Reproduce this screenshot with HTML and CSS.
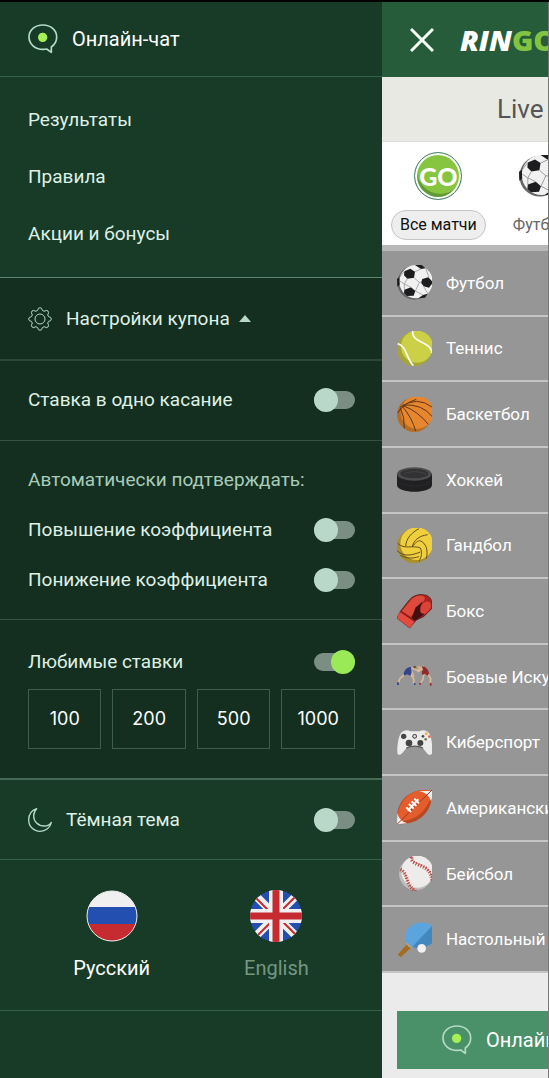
FILE: index.html
```html
<!DOCTYPE html>
<html lang="ru">
<head>
    <meta charset="UTF-8">
    <meta name="viewport" content="width=device-width, initial-scale=1.0">
    <title>Ringo</title>
    <link rel="stylesheet" href="styles.css">
</head>
<body>
    <svg class="sprite" aria-hidden="true">
        <symbol id="chat" viewBox="0 0 90 90">
            <path d="M45 3C21 3 3 18 3 39s18 37 42 37c4 0 8 0 11-1l14 10v-16c10-7 16-17 16-30C86 18 68 3 45 3z" fill="none" stroke="#b3dbc6" stroke-width="5" stroke-linejoin="round"/>
            <circle cx="44" cy="40" r="14" fill="#a5f155"/>
        </symbol>
        <symbol id="football" viewBox="0 0 105 105">
            <circle cx="52" cy="53" r="51" fill="#666"/>
            <circle cx="57" cy="50" r="50" fill="#f1f1f1"/>
            <path d="M22 19l18-8 14 9-3 18-20 3-10-10zM76 42l18-5 14 15-12 16-16-4-8-11zM22 74l20-7 13 11-5 14-20 1-9-8zM54 0h20l12 10-14 2zM64 100l14-10 14-4-8 12zM0 42l7-5 1 22-7 6z" fill="#1d1d1f"/>
            <path d="M51 38l16 14-12 26M67 52h8M54 20l18-8M86 10l10 27M31 41l-9 16v17M42 67l-20-10M80 64l12 22M55 78l23 12M8 48l14 9M22 19L8 37" fill="none" stroke="#888" stroke-width="2"/>
        </symbol>
    </svg>

    <div class="layout">
        <nav class="drawer">
            <a class="chat-link" href="#chat">
                <svg class="icon-chat"><use href="#chat"/></svg>
                Онлайн-чат
            </a>

            <div class="links">
                <a href="#results">Результаты</a>
                <a href="#rules">Правила</a>
                <a href="#promo">Акции и бонусы</a>
            </div>

            <section class="coupon">
                <button class="coupon-toggle" type="button" aria-expanded="true">
                    <svg class="icon" viewBox="0 0 72 72" fill="none" stroke="#b3dbc6" stroke-width="3" stroke-linejoin="round">
                        <circle cx="36" cy="36" r="15"/>
                        <path d="M29 10Q30 2 36 2T43 10L48 13Q56 8 60 12T59 24L62 29Q70 30 70 36T62 43L59 48Q64 56 60 60T48 59L43 62Q42 70 36 70T29 62L24 59Q16 64 12 60T13 48L10 43Q2 42 2 36T10 29L13 24Q8 16 12 12T24 13Z"/>
                    </svg>
                    Настройки купона
                    <span class="arrow"></span>
                </button>

                <div class="block single">
                    <label class="option">Ставка в одно касание <input class="switch" type="checkbox"></label>
                </div>

                <div class="block auto">
                    <p>Автоматически подтверждать:</p>
                    <label class="option">Повышение коэффициента <input class="switch" type="checkbox"></label>
                    <label class="option">Понижение коэффициента <input class="switch" type="checkbox"></label>
                </div>

                <div class="block favorite">
                    <label class="option">Любимые ставки <input class="switch" type="checkbox" checked></label>
                    <div class="bets">
                        <button type="button">100</button>
                        <button type="button">200</button>
                        <button type="button">500</button>
                        <button type="button">1000</button>
                    </div>
                </div>
            </section>

            <label class="theme">
                <svg class="icon" viewBox="0 0 72 72" fill="none" stroke="#b3dbc6" stroke-width="4" stroke-linejoin="round">
                    <path d="M26 2C11 7 2 20 2 36c0 19 15 34 34 34 17 0 31-11 34-27-5 8-13 11-21 11C30 54 17 40 17 24c0-9 3-16 9-22z"/>
                </svg>
                Тёмная тема
                <input class="switch" type="checkbox">
            </label>

            <div class="langs">
                <a class="lang active" href="#ru">
                    <svg class="flag" viewBox="0 0 52 52">
                        <clipPath id="ru-clip"><circle cx="26" cy="26" r="25"/></clipPath>
                        <g clip-path="url(#ru-clip)">
                            <path d="M0 0h52v17H0z" fill="#f0f0f0"/>
                            <path d="M0 17h52v17H0z" fill="#2350b0"/>
                            <path d="M0 34h52v18H0z" fill="#c62b31"/>
                        </g>
                        <circle cx="26" cy="26" r="25" fill="none" stroke="#f0f0f0"/>
                    </svg>
                    Русский
                </a>
                <a class="lang" href="#en">
                    <svg class="flag" viewBox="0 0 52 52">
                        <clipPath id="en-clip"><circle cx="26" cy="26" r="26"/></clipPath>
                        <g clip-path="url(#en-clip)">
                            <path d="M0 0h52v52H0z" fill="#2350b0"/>
                            <path d="M4 4l44 44M48 4L4 48" stroke="#f0f0f0" stroke-width="8"/>
                            <path d="M6 8l13 13M46 6L32 20M33 32l13 13M20 33L7 46" stroke="#c62b31" stroke-width="2"/>
                            <path d="M26 0v52M0 26h52" stroke="#f0f0f0" stroke-width="14"/>
                            <path d="M26 0v52M0 26h52" stroke="#c62b31" stroke-width="7"/>
                        </g>
                    </svg>
                    English
                </a>
            </div>
        </nav>

        <main class="page">
            <header class="header">
                <button class="close" type="button" aria-label="Закрыть">
                    <svg viewBox="0 0 24 24"><path d="M1 1l22 22M23 1L1 23" stroke="#f4fff8" stroke-width="3"/></svg>
                </button>
                <a class="logo" href="#home">RIN<span>GO</span></a>
            </header>

            <h1 class="live">Live</h1>

            <div class="tabs">
                <a class="tab active" href="#all">
                    <span class="go">GO</span>
                    <span class="tab-name">Все матчи</span>
                </a>
                <a class="tab" href="#football-live">
                    <svg class="tab-ball"><use href="#football"/></svg>
                    <span class="tab-name">Футбол</span>
                </a>
            </div>

            <ul class="sports">
                <li><a href="#s1"><svg class="sport"><use href="#football"/></svg>Футбол</a></li>
                <li><a href="#s2">
                    <svg class="sport" viewBox="0 0 105 105">
                        <circle cx="52" cy="54" r="52" fill="#a5a53a"/>
                        <circle cx="60" cy="47" r="48" fill="#cbd046"/>
                        <path d="M47 0c-4 38 54 28 58 66M2 38c28 8 24 42 47 66" fill="none" stroke="#fafaf0" stroke-width="5"/>
                    </svg>Теннис</a></li>
                <li><a href="#s3">
                    <svg class="sport" viewBox="0 0 105 105">
                        <circle cx="52" cy="53" r="52" fill="#b56c24"/>
                        <circle cx="60" cy="46" r="49" fill="#e6872f"/>
                        <path d="M2 48Q18 20 58 7M10 30Q60-4 105 30M18 24Q75 20 105 58M18 26Q62 42 94 82M16 28Q44 60 56 102M10 32Q24 64 22 94" fill="none" stroke="#5f3616" stroke-width="3"/>
                    </svg>Баскетбол</a></li>
                <li><a href="#s4">
                    <svg class="sport" viewBox="0 0 105 105">
                        <path d="M0 35v34c0 27 105 27 105 0V35z" fill="#202022"/>
                        <ellipse cx="52" cy="36" rx="52" ry="20" fill="#4c4c4c"/>
                        <ellipse cx="52" cy="35" rx="42" ry="14" fill="#323234"/>
                        <path d="M20 38c8-12 58-12 66 0" fill="none" stroke="#444" stroke-width="3"/>
                        <path d="M3 56c10 20 90 20 100 0" fill="none" stroke="#303032" stroke-width="3" stroke-dasharray="4 4"/>
                    </svg>Хоккей</a></li>
                <li><a href="#s5">
                    <svg class="sport" viewBox="0 0 105 105">
                        <circle cx="52" cy="54" r="52" fill="#aa9028"/>
                        <circle cx="59" cy="47" r="49" fill="#f0cf3e"/>
                        <path d="M26 54C28 30 44 14 66 2M46 56c4-18 18-32 46-36M2 46c20 20 46 4 68 14 6 12 4 26-4 40M0 68c22 20 44 14 70 4M68 38c20 6 26 30 20 54M46 56c8-12 18-18 22-18M10 82c20 10 36 10 56 4" fill="none" stroke="#66501c" stroke-width="3"/>
                    </svg>Гандбол</a></li>
                <li><a href="#s6">
                    <svg class="sport" viewBox="0 0 105 105">
                        <path d="M10 52L32 24C46 4 66-2 88 4c16 6 20 22 16 40L80 68 58 78 38 102 0 72z" fill="#a92420" stroke="#431513" stroke-width="2"/>
                        <path d="M34 28C48 6 68-1 82 8c5 10-6 20-20 34L42 68 14 52z" fill="#df493c"/>
                        <path d="M70 38C80 20 102 16 102 36c0 10-14 22-26 30l-16-8z" fill="#dc4238"/>
                        <path d="M56 40c8-4 14-12 22-18-6 12-8 16-8 24-2 10 4 14 14 14L54 80 44 72z" fill="#42100f"/>
                        <path d="M8 54l44 30-14 18L0 72z" fill="#e34a40"/>
                        <path d="M14 53l38 28" stroke="#7b1e1a" stroke-width="3"/>
                    </svg>Бокс</a></li>
                <li><a href="#s7">
                    <svg class="sport" viewBox="0 0 105 105">
                        <g fill="none" stroke="#d9b896" stroke-width="5" stroke-linecap="round" stroke-linejoin="round">
                            <path d="M24 46L9 58 4 72M42 48l9 14-1 12M80 46l-2 14-6 10M92 46l9 12-1 14M42 26l18 8 18-12M42 30l8 22M80 28L62 38"/>
                        </g>
                        <path d="M20 44c2-12 12-20 22-20l2 14-4 12-10-4-8 4z" fill="#34458c"/>
                        <path d="M74 22c12 0 21 10 22 22l-5 6-7-6-8 4-2-10 4-6z" fill="#93292d"/>
                        <circle cx="53" cy="24" r="4" fill="#7b4d2d"/>
                        <circle cx="65" cy="24" r="4" fill="#d8ae80"/>
                        <path d="M3 70v8M51 73l4 4" stroke="#2d3c88" stroke-width="5"/>
                        <path d="M70 72l-2 5M100 72l2 8" stroke="#a3252c" stroke-width="5"/>
                    </svg>Боевые Искусства</a></li>
                <li><a href="#s8">
                    <svg class="sport" viewBox="0 0 105 105">
                        <path d="M12 24c8-9 20-10 28-5h28c8-5 20-4 28 5 8 12 10 36 10 56 0 12-10 12-16 5L78 70c-12-8-40-8-50 0L14 86c-6 6-14 4-13-7 0-20 3-43 11-55z" fill="#ececec"/>
                        <g fill="#444"><circle cx="20" cy="34" r="8"/><circle cx="36" cy="54" r="10"/><circle cx="70" cy="54" r="9"/><circle cx="78" cy="34" r="4"/><circle cx="53" cy="34" r="7"/></g>
                        <circle cx="53" cy="34" r="4" fill="#ddd"/>
                        <circle cx="88" cy="26" r="5" fill="#f2b84a"/>
                        <circle cx="97" cy="35" r="4" fill="#e2694e"/>
                        <circle cx="86" cy="43" r="4" fill="#6e7c4a"/>
                        <path d="M28 70c12-9 38-9 50 0" fill="none" stroke="#555" stroke-width="4"/>
                    </svg>Киберспорт</a></li>
                <li><a href="#s9">
                    <svg class="sport" viewBox="0 0 105 105">
                        <path d="M0 102C-4 66 8 30 34 14 56 0 82-2 105 2c2 34-8 62-34 82-20 14-44 20-71 18z" fill="#b84922"/>
                        <path d="M2 94C0 60 12 32 36 14 56 0 82-2 102 4c0 28-14 52-36 70-20 14-42 20-64 20z" fill="#e45d2d"/>
                        <path d="M66 4C84 6 96 16 102 34l4-14V2zM1 68c4 16 12 26 30 32l-31 3z" fill="#f0f0f0"/>
                        <path d="M0 103L105 0" stroke="#9c3617" stroke-width="3"/>
                        <path d="M32 62l32-34M28 52l14 14M36 42l14 14M44 34l14 14M52 26l14 14" stroke="#fff" stroke-width="6"/>
                    </svg>Американский футбол</a></li>
                <li><a href="#s10">
                    <svg class="sport" viewBox="0 0 105 105">
                        <circle cx="56" cy="53" r="50" fill="#bdbdbd"/>
                        <circle cx="61" cy="47" r="48" fill="#eeecea"/>
                        <path d="M44 2c-4 30 58 14 61 70M10 40c24 12 14 46 46 66" fill="none" stroke="#b8403d" stroke-width="2"/>
                        <path d="M44 4c-4 30 58 14 61 70M10 40c24 12 14 46 46 66" fill="none" stroke="#b8403d" stroke-width="11" stroke-dasharray="3 5"/>
                    </svg>Бейсбол</a></li>
                <li><a href="#s11">
                    <svg class="sport" viewBox="0 0 105 105">
                        <path d="M2 98l30-34 12 11L12 105z" fill="#a66b20"/>
                        <path d="M34 76C22 54 22 20 46 8c22-12 50-6 60 6v50c-18 14-44 18-60 12z" fill="#5ba5df"/>
                        <path d="M105 12v52C86 78 62 82 46 74z" fill="#4288bf"/>
                        <path d="M28 64l16 13" stroke="#d0a05c" stroke-width="4"/>
                        <circle cx="74" cy="79" r="13" fill="#f0f0ee"/>
                    </svg>Настольный теннис</a></li>
            </ul>

            <a class="chat-button" href="#chat">
                <svg class="icon-chat"><use href="#chat"/></svg>
                Онлайн-чат
            </a>
        </main>
    </div>
</body>
</html>
```
FILE: styles.css
```css
* {
    box-sizing: border-box;
}

body {
    margin: 0;
    font-family: Roboto, "Liberation Sans", sans-serif;
    font-size: 19px;
    line-height: 24px;
    color: #dff0e5;
    background: #183b28;
}

a {
    color: inherit;
    text-decoration: none;
    white-space: nowrap;
}

button {
    padding: 0;
    border: 0;
    background: none;
    color: inherit;
    font: inherit;
    cursor: pointer;
}

svg {
    flex: none;
}

.sprite {
    display: none;
}

.layout {
    display: grid;
    grid-template-columns: 16fr 7fr;
    min-height: 100vh;
    border-top: 2px solid #000;
    overflow: hidden;
}

/* Боковое меню */
.drawer {
    background: #183b28;
}

.chat-link {
    display: flex;
    align-items: center;
    gap: 14px;
    height: 75px;
    padding: 0 27px 0 28px;
    border-bottom: 1px solid #35604a;
    font-size: 20px;
    color: #fff;
}

.icon-chat {
    width: 30px;
    height: 30px;
}

.icon {
    width: 24px;
    height: 24px;
}

.links {
    display: flex;
    flex-direction: column;
    padding: 14px 28px 15px;
    border-bottom: 1px solid #5b8670;
}

.links a {
    line-height: 57px;
}

/* Настройки купона */
.coupon {
    background: #142f20;
    border-bottom: 2px solid #456b57;
}

.coupon-toggle {
    display: flex;
    align-items: center;
    gap: 14px;
    width: 100%;
    height: 83px;
    padding: 0 28px;
    border-bottom: 2px solid #29473a;
}

.arrow {
    margin-left: -5px;
    border: 6px solid transparent;
    border-top: 0;
    border-bottom: 7px solid #b8d8c8;
}

.block {
    padding: 0 27px 0 28px;
    border-bottom: 1px solid #35543f;
}

.block:last-child {
    border-bottom: 0;
}

.option {
    display: flex;
    align-items: center;
    justify-content: space-between;
    height: 50px;
}

.single {
    padding-top: 14px;
    padding-bottom: 15px;
}

.auto {
    padding-top: 14px;
    padding-bottom: 14px;
}

.auto p {
    margin: 0;
    line-height: 50px;
    color: #a8ccb9;
}

.favorite {
    padding-top: 17px;
    padding-bottom: 29px;
}

.bets {
    display: grid;
    grid-template-columns: repeat(4, 1fr);
    gap: 11px;
    padding-top: 2px;
}

.bets button {
    height: 60px;
    border: 1px solid #3c5e4a;
    font-family: Inter, sans-serif;
    font-size: 18px;
    color: #fff;
}

/* Переключатель */
.switch {
    appearance: none;
    width: 41px;
    height: 18px;
    margin: 0;
    border-radius: 9px;
    background: #7b8e84;
}

.switch::before {
    content: "";
    display: block;
    width: 24px;
    height: 24px;
    margin-top: -3px;
    border-radius: 50%;
    background: #b9d8c9;
}

.switch:checked::before {
    margin-left: 17px;
    background: #99ea56;
}

.theme {
    display: flex;
    align-items: center;
    gap: 14px;
    height: 80px;
    padding: 0 27px 0 28px;
    border-bottom: 1px solid #35604a;
}

.theme .switch {
    margin-left: auto;
}

.langs {
    display: flex;
    justify-content: center;
    gap: 94px;
    padding: 30px 0;
    border-bottom: 1px solid #35604a;
    font-size: 20px;
}

.lang {
    display: flex;
    flex-direction: column;
    align-items: center;
    gap: 14px;
    color: #759782;
}

.lang.active {
    color: #fff;
}

.flag {
    width: 52px;
    height: 52px;
}

/* Страница под меню */
.page {
    display: flex;
    flex-direction: column;
    min-width: 0;
    overflow: hidden;
    background: #ebebeb;
    border-right: 1px solid #777;
}

.header {
    display: flex;
    align-items: center;
    gap: 26px;
    height: 75px;
    padding-left: 28px;
    background: #265c3a;
}

.close svg {
    display: block;
    width: 24px;
    height: 24px;
}

.logo {
    font-family: "Open Sans", sans-serif;
    font-size: 29px;
    font-weight: 800;
    font-style: italic;
    color: #fff;
}

.logo span {
    font-style: normal;
    color: #82c341;
}

.live {
    margin: 0;
    padding-left: 115px;
    border-bottom: 1px solid #ddd;
    background: #e9e9e3;
    font-size: 26px;
    font-weight: 400;
    line-height: 64px;
    color: #555;
}

.tabs {
    display: flex;
    gap: 18px;
    padding: 10px 9px 5px;
    border-bottom: 6px solid #b8b8b8;
    background: #fff;
    font-size: 16px;
    color: #666;
}

.tab {
    display: flex;
    flex-direction: column;
    align-items: center;
    gap: 10px;
}

.go {
    width: 48px;
    height: 48px;
    border: 1px solid #4b8b78;
    border-radius: 50%;
    background: radial-gradient(circle at 55% 38%, #87c440 60%, #5f9a34 62%);
    box-shadow: inset 0 0 0 2px #fff;
    font-family: Lato, sans-serif;
    font-size: 25px;
    font-weight: 900;
    line-height: 46px;
    text-align: center;
    color: #fff;
}

.tab-ball {
    width: 42px;
    height: 42px;
    margin: 3px 0;
}

.tab-name {
    padding: 0 8px;
    border: 1px solid transparent;
    border-radius: 15px;
    line-height: 28px;
}

.active .tab-name {
    border-color: #c4c4c4;
    background: #eee;
    color: #111;
}

.sports {
    display: flex;
    flex: 1;
    flex-direction: column;
    margin: 0;
    padding: 0;
    list-style: none;
    background: #969696;
    font-size: 17px;
    color: #fff;
}

.sports li {
    display: flex;
    flex: 1;
    border-bottom: 2px solid #c4c4c4;
}

.sports a {
    display: flex;
    align-items: center;
    gap: 14px;
    padding-left: 15px;
}

.sport {
    width: 35px;
    height: 35px;
}

.chat-button {
    display: flex;
    align-items: center;
    gap: 14px;
    height: 58px;
    margin: 38px 0 9px 15px;
    padding-left: 45px;
    background: #4a9068;
    font-size: 20px;
    color: #fff;
}
```
